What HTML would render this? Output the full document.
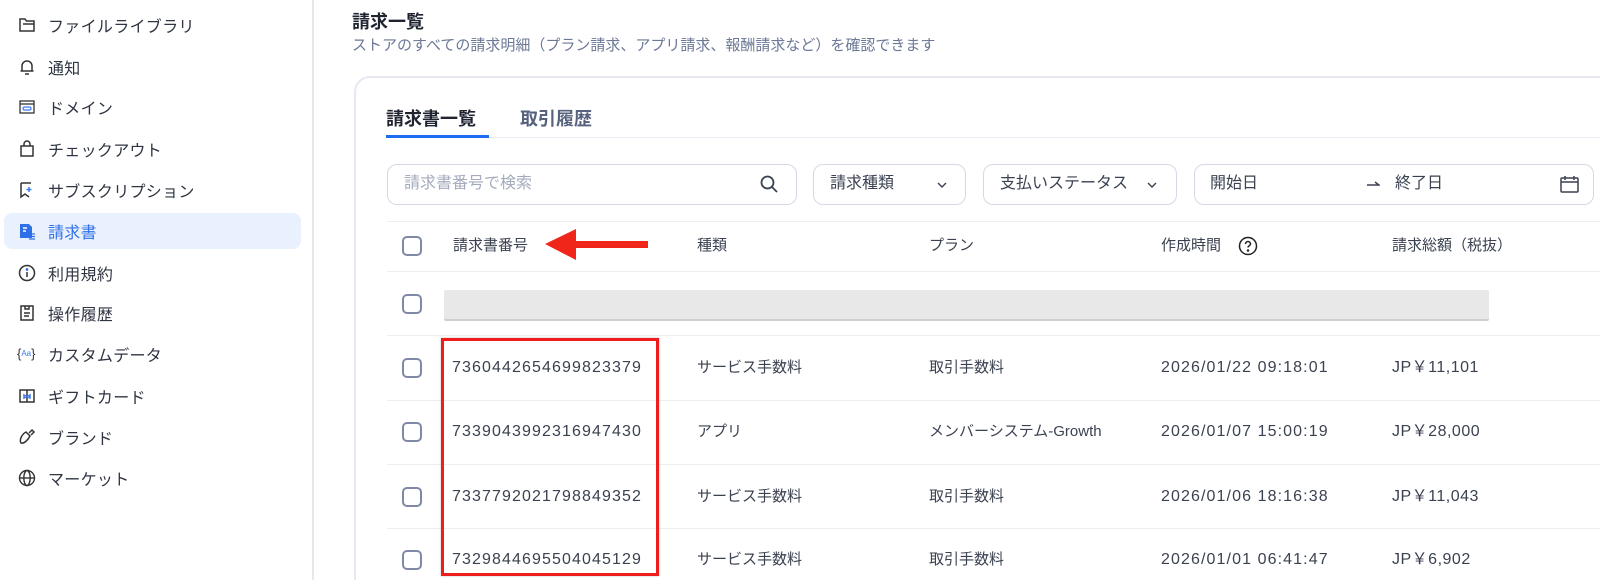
<!DOCTYPE html>
<html style="width:1600px;height:580px;overflow:hidden"><head><meta charset="utf-8"><style>
*{box-sizing:border-box;margin:0;padding:0}
body{width:1600px;height:580px;overflow:hidden;background:#fff;font-family:"Liberation Sans","Noto Sans CJK JP",sans-serif;color:#2f3542;position:relative}
.a{position:absolute;white-space:nowrap}
.side{position:absolute;left:0;top:0;width:314px;height:580px;border-right:2px solid #e6e8f0}
.it{position:absolute;left:48px;font-size:16px;color:#2f3542;transform:translateY(-50%);letter-spacing:.3px}
.ic{position:absolute;left:18px;width:18px;height:18px;transform:translateY(-50%)}
.cb{position:absolute;width:20px;height:20px;border:2px solid #7f88a6;border-radius:5px;left:402px;transform:translateY(-50%)}
.box{position:absolute;border:1px solid #d5d9e6;border-radius:10px;height:41px;top:164px}
.t{position:absolute;font-size:15px;color:#3a4150;transform:translateY(-50%);white-space:nowrap;line-height:20px}
.n{font-size:16px;letter-spacing:1.1px}
.hl{position:absolute;left:387px;right:0;height:1px;background:#eceef3}
.f{position:absolute;font-size:16px;color:#3a4150;top:184px;transform:translateY(-50%);line-height:20px;white-space:nowrap}
</style></head><body>
<div class="side">
 <div style="position:absolute;left:4px;top:213px;width:297px;height:36px;background:#eaf1fe;border-radius:8px"></div>
 <svg class="ic" style="top:25px" viewBox="0 0 18 18" fill="none" stroke="#333" stroke-width="1.5"><path d="M2 3h5l1.5 2H16v10H2z"/><path d="M5 8h11"/></svg><div class="it" style="top:25px">ファイルライブラリ</div>
 <svg class="ic" style="top:67px" viewBox="0 0 18 18" fill="none" stroke="#333" stroke-width="1.5"><path d="M4 13V8a5 5 0 0110 0v5zM2.5 13h13M7 16h4"/></svg><div class="it" style="top:67px">通知</div>
 <svg class="ic" style="top:107px" viewBox="0 0 18 18" fill="none" stroke="#333" stroke-width="1.3"><rect x="2" y="3" width="14" height="12"/><path d="M2 6h14"/><rect x="5" y="9" width="8" height="3" rx="1.5" stroke="#3d7cf0"/></svg><div class="it" style="top:107px">ドメイン</div>
 <svg class="ic" style="top:149px" viewBox="0 0 18 18" fill="none" stroke="#333" stroke-width="1.5"><path d="M3 6h12v10H3zM6 6V4a3 3 0 016 0v2"/></svg><div class="it" style="top:149px">チェックアウト</div>
 <svg class="ic" style="top:190px" viewBox="0 0 18 18" fill="none" stroke="#333" stroke-width="1.5"><path d="M3 2h10M3 2v14l4-3 4 3"/><path d="M11 6v5M8.5 8.5h5" stroke="#3d7cf0"/></svg><div class="it" style="top:190px">サブスクリプション</div>
 <svg class="ic" style="top:231px" viewBox="0 0 18 18"><path d="M2 2h9l3 3v11H2z" fill="#2f6fe8"/><path d="M5 6h4M5 9h3" stroke="#fff" stroke-width="1.5"/><path d="M11 12h6M11 14.5h6M11 17h6" stroke="#2f6fe8" stroke-width="1.2"/></svg><div class="it" style="top:231px;color:#2f6fe8">請求書</div>
 <svg class="ic" style="top:273px" viewBox="0 0 18 18" fill="none" stroke="#333" stroke-width="1.5"><circle cx="9" cy="9" r="7.5"/><path d="M9 8v5"/><circle cx="9" cy="5.5" r=".6" fill="#2f6fe8" stroke="#2f6fe8"/></svg><div class="it" style="top:273px">利用規約</div>
 <svg class="ic" style="top:313px" viewBox="0 0 18 18" fill="none" stroke="#333" stroke-width="1.5"><path d="M3 2h12v14H3zM7 2v3h4V2M6 9h6M6 12h5"/></svg><div class="it" style="top:313px">操作履歴</div>
 <div class="a" style="left:17px;top:346px;font-size:13px;color:#333">{<span style="font-size:8px;color:#3d7cf0;vertical-align:2px">Aa</span>}</div><div class="it" style="top:354px">カスタムデータ</div>
 <svg class="ic" style="top:396px" viewBox="0 0 18 18" fill="none" stroke="#333" stroke-width="1.5"><rect x="2" y="3" width="14" height="12"/><path d="M9 3v12"/><path d="M6 8l3 1.5L12 8v3L9 9.5 6 11z" stroke="#3d7cf0"/></svg><div class="it" style="top:396px">ギフトカード</div>
 <svg class="ic" style="top:437px" viewBox="0 0 18 18" fill="none" stroke="#333" stroke-width="1.5"><path d="M3 15c-2-3 1-9 5-11l4 4c-2 4-6 8-9 7zM11 5l3-3 2 2-3 3"/></svg><div class="it" style="top:437px">ブランド</div>
 <svg class="ic" style="top:478px" viewBox="0 0 18 18" fill="none" stroke="#333" stroke-width="1.4"><circle cx="9" cy="9" r="7.5"/><ellipse cx="9" cy="9" rx="3.2" ry="7.5"/><path d="M1.5 9h15"/></svg><div class="it" style="top:478px">マーケット</div>
</div>

<div class="a" style="left:352px;top:8px;font-size:18px;font-weight:bold;color:#1f2430">請求一覧</div>
<div class="a" style="left:352px;top:34px;font-size:15px;color:#6b7896">ストアのすべての請求明細（プラン請求、アプリ請求、報酬請求など）を確認できます</div>

<div style="position:absolute;left:354px;top:76px;width:1300px;height:520px;border:2px solid #e6e9f2;border-radius:16px"></div>
<div class="a" style="left:386px;top:105px;font-size:18px;font-weight:bold;color:#1f2430">請求書一覧</div>
<div class="a" style="left:520px;top:105px;font-size:18px;font-weight:bold;color:#56627e">取引履歴</div>
<div class="hl" style="top:137px;left:386px;background:#e9ecf2"></div>
<div style="position:absolute;left:386px;top:135px;width:103px;height:3px;background:#1f6cf0"></div>

<div class="box" style="left:387px;width:410px"></div>
<div class="f" style="left:404px;color:#a4abbd">請求書番号で検索</div>
<svg class="a" style="left:759px;top:174px" width="20" height="20" viewBox="0 0 20 20" fill="none" stroke="#3a4150" stroke-width="1.8"><circle cx="8.5" cy="8.5" r="6"/><path d="M13 13l5 5"/></svg>
<div class="box" style="left:813px;width:153px"></div>
<div class="f" style="left:830px">請求種類</div>
<svg class="a" style="left:936px;top:180px" width="12" height="10" viewBox="0 0 12 10" fill="none" stroke="#3a4150" stroke-width="1.4"><path d="M2 3l4 4 4-4"/></svg>
<div class="box" style="left:983px;width:194px"></div>
<div class="f" style="left:1000px">支払いステータス</div>
<svg class="a" style="left:1146px;top:180px" width="12" height="10" viewBox="0 0 12 10" fill="none" stroke="#3a4150" stroke-width="1.4"><path d="M2 3l4 4 4-4"/></svg>
<div class="box" style="left:1194px;width:400px"></div>
<div class="f" style="left:1210px">開始日</div>
<svg class="a" style="left:1366px;top:180px" width="14" height="8" viewBox="0 0 14 8" fill="none" stroke="#3a4150" stroke-width="1.5"><path d="M1 5h12L9 2"/></svg>
<div class="f" style="left:1395px">終了日</div>
<svg class="a" style="left:1560px;top:175px" width="19" height="18" viewBox="0 0 19 18" fill="none" stroke="#3a4150" stroke-width="1.5"><rect x="1" y="3" width="17" height="14" rx="1"/><path d="M1 7h17M5 1v4M14 1v4"/></svg>

<div class="hl" style="top:221px"></div>
<div class="cb" style="top:246px"></div>
<div class="t" style="left:453px;top:246px">請求書番号</div>
<div class="t" style="left:697px;top:246px">種類</div>
<div class="t" style="left:929px;top:246px">プラン</div>
<div class="t" style="left:1161px;top:246px">作成時間</div>
<svg class="a" style="left:1238px;top:236px" width="20" height="20" viewBox="0 0 20 20" fill="none" stroke="#222" stroke-width="1.5"><circle cx="10" cy="10" r="8.5"/><path d="M7.5 8a2.5 2.5 0 115 0c0 1.5-2.5 2-2.5 3.5"/><circle cx="10" cy="14.5" r=".5" fill="#222"/></svg>
<div class="t" style="left:1392px;top:246px">請求総額（税抜）</div>
<svg class="a" style="left:543px;top:228px" width="108" height="34" viewBox="0 0 108 34"><path d="M2 16L33 1v12h72v7H33v12z" fill="#f0261b"/></svg>

<div class="hl" style="top:271px"></div>
<div class="cb" style="top:304px"></div>
<div style="position:absolute;left:444px;top:290px;width:1045px;height:31px;background:#e8e8e8;border-radius:2px;border-bottom:2px solid #cfcfcf"></div>

<div class="hl" style="top:335px"></div>
<div class="cb" style="top:368px"></div>
<div class="t n" style="left:452px;top:368px">7360442654699823379</div>
<div class="t" style="left:697px;top:368px">サービス手数料</div>
<div class="t" style="left:929px;top:368px">取引手数料</div>
<div class="t n" style="left:1161px;top:368px">2026/01/22 09:18:01</div>
<div class="t n" style="left:1392px;top:368px;letter-spacing:.5px">JP￥11,101</div>

<div class="hl" style="top:400px"></div>
<div class="cb" style="top:432px"></div>
<div class="t n" style="left:452px;top:432px">7339043992316947430</div>
<div class="t" style="left:697px;top:432px">アプリ</div>
<div class="t" style="left:929px;top:432px">メンバーシステム-Growth</div>
<div class="t n" style="left:1161px;top:432px">2026/01/07 15:00:19</div>
<div class="t n" style="left:1392px;top:432px;letter-spacing:.5px">JP￥28,000</div>

<div class="hl" style="top:464px"></div>
<div class="cb" style="top:497px"></div>
<div class="t n" style="left:452px;top:497px">7337792021798849352</div>
<div class="t" style="left:697px;top:497px">サービス手数料</div>
<div class="t" style="left:929px;top:497px">取引手数料</div>
<div class="t n" style="left:1161px;top:497px">2026/01/06 18:16:38</div>
<div class="t n" style="left:1392px;top:497px;letter-spacing:.5px">JP￥11,043</div>

<div class="hl" style="top:528px"></div>
<div class="cb" style="top:560px"></div>
<div class="t n" style="left:452px;top:560px">7329844695504045129</div>
<div class="t" style="left:697px;top:560px">サービス手数料</div>
<div class="t" style="left:929px;top:560px">取引手数料</div>
<div class="t n" style="left:1161px;top:560px">2026/01/01 06:41:47</div>
<div class="t n" style="left:1392px;top:560px;letter-spacing:.5px">JP￥6,902</div>

<div style="position:absolute;left:441px;top:338px;width:218px;height:238px;border:3px solid #ee1c1c;box-shadow:0 0 2px rgba(0,0,0,.25)"></div>
</body></html>
